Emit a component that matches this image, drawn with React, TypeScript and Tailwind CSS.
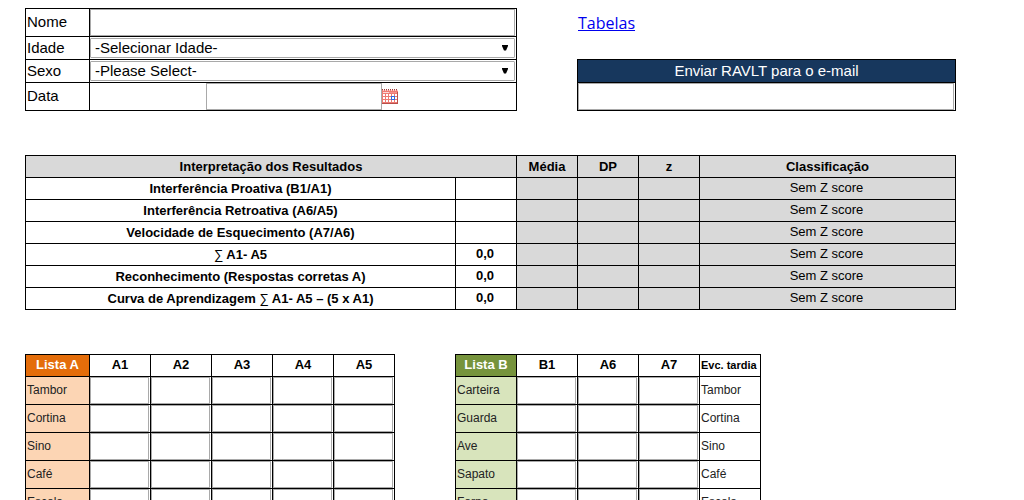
import React from "react";

const results: { label: React.ReactNode; value: string }[] = [
  { label: "Interferência Proativa (B1/A1)", value: "" },
  { label: "Interferência Retroativa (A6/A5)", value: "" },
  { label: "Velocidade de Esquecimento (A7/A6)", value: "" },
  { label: <><Sum /> A1- A5</>, value: "0,0" },
  { label: "Reconhecimento (Respostas corretas A)", value: "0,0" },
  { label: <>Curva de Aprendizagem <Sum /> A1- A5 – (5 x A1)</>, value: "0,0" },
];

const listA = ["Tambor", "Cortina", "Sino", "Café", "Escola"];
const listB = ["Carteira", "Guarda", "Ave", "Sapato", "Forno"];

const cell = "border border-black p-0";
const field = "block h-[27px] border border-[#a9a9a9] bg-white px-1 outline-none";

function Sum() {
  return <span className="font-normal">∑</span>;
}

function Select({ id, text }: { id: string; text: string }) {
  return (
    <div className="relative my-px mr-px">
      <select
        id={id}
        className="block h-5 w-full appearance-none rounded-[1px] border border-[#a9a9a9] bg-white pl-1 pr-5 text-[15px] leading-[18px] outline-none"
      >
        <option>{text}</option>
      </select>
      <svg
        viewBox="0 0 6 6"
        className="pointer-events-none absolute right-[7px] top-[7px] h-1.5 w-1.5"
        aria-hidden="true"
      >
        <path d="M0 0H6V1L4 5.5H2L0 1Z" fill="#000" />
      </svg>
    </div>
  );
}

function CalendarIcon() {
  return (
    <svg viewBox="0 0 16 15" className="block h-[15px] w-4" shapeRendering="crispEdges" aria-hidden="true">
      <rect y="1" width="16" height="14" fill="#ee7a72" />
      <path d="M0 .5H16" stroke="#a03c38" strokeDasharray="1 1" />
      <path d="M1 1.5H16" stroke="#f7cfcc" strokeDasharray="1 1" />
      <path d="M1 3.5H7" stroke="#fbd9d6" />
      <path d="M7 3.5H15" stroke="#f2938d" />
      <g fill="#fff">
        {[5, 8, 11].map((y) =>
          [1, 4, 7, 10, 13].map((x) => <rect key={`${x}-${y}`} x={x} y={y} width="2" height="2" />)
        )}
      </g>
      <path d="M0 14.5H16M15.5 3V15" stroke="#b9504b" />
      <rect x="9.5" y="7.5" width="3" height="3" fill="#fff" stroke="#2f6be0" />
    </svg>
  );
}

function PatientForm() {
  const label = `${cell} pl-px text-left font-normal`;
  return (
    <table className="w-full table-fixed border-collapse text-[15px] leading-[18px]">
      <colgroup>
        <col className="w-16" />
        <col />
      </colgroup>
      <tbody>
        <tr className="h-7">
          <th className={`${label} pb-0.5`}><label htmlFor="nome">Nome</label></th>
          <td className={`${cell} pr-px`}><input id="nome" className={`${field} w-full`} /></td>
        </tr>
        <tr className="h-[23px]">
          <th className={label}><label htmlFor="idade">Idade</label></th>
          <td className={cell}><Select id="idade" text="-Selecionar Idade-" /></td>
        </tr>
        <tr className="h-[23px]">
          <th className={label}><label htmlFor="sexo">Sexo</label></th>
          <td className={cell}><Select id="sexo" text="-Please Select-" /></td>
        </tr>
        <tr className="h-7">
          <th className={`${label} pb-0.5`}><label htmlFor="data">Data</label></th>
          <td className={`${cell} pr-0.5`}>
            <div className="flex items-center justify-center">
              <input id="data" className={`${field} w-44`} />
              <button type="button" aria-label="Abrir calendário"><CalendarIcon /></button>
            </div>
          </td>
        </tr>
      </tbody>
    </table>
  );
}

function EmailBox() {
  return (
    <div className="flex flex-col justify-between">
      <div className="pl-px pt-[3px]">
        <a href="#tabelas" className="font-['Open_Sans','Noto_Sans',sans-serif] text-[16px] leading-6 text-[#0000ee] underline">
          Tabelas
        </a>
      </div>
      <table className="w-full table-fixed border-collapse text-[15px] leading-[18px]">
        <thead>
          <tr className="h-[23px]">
            <th className={`${cell} bg-[#17375d] font-normal text-white`}>
              <label htmlFor="email">Enviar RAVLT para o e-mail</label>
            </th>
          </tr>
        </thead>
        <tbody>
          <tr className="h-7">
            <td className={`${cell} pr-px`}><input id="email" type="email" className={`${field} w-full`} /></td>
          </tr>
        </tbody>
      </table>
    </div>
  );
}

function ResultsTable() {
  const grey = `${cell} bg-[#d9d9d9]`;
  return (
    <table className="w-full table-fixed border-collapse text-center text-[13px] leading-4">
      <colgroup>
        <col />
        <col className="w-[61px]" />
        <col className="w-[61px]" />
        <col className="w-[61px]" />
        <col className="w-[61px]" />
        <col className="w-[256px]" />
      </colgroup>
      <thead>
        <tr className="h-[22px]">
          <th colSpan={2} className={grey}>Interpretação dos Resultados</th>
          <th className={grey}>Média</th>
          <th className={grey}>DP</th>
          <th className={grey}>z</th>
          <th className={grey}>Classificação</th>
        </tr>
      </thead>
      <tbody>
        {results.map((row, i) => (
          <tr key={i} className="h-[22px]">
            <th className={cell}>{row.label}</th>
            <td className={`${cell} pb-0.5 pr-0.5 font-bold`}>{row.value}</td>
            <td className={grey} />
            <td className={grey} />
            <td className={grey} />
            <td className={`${grey} pb-0.5 pr-0.5`}>Sem Z score</td>
          </tr>
        ))}
      </tbody>
    </table>
  );
}

type WordTableProps = {
  title: string;
  titleClass: string;
  wordClass: string;
  columns: string[];
  words: string[];
  late?: string[];
};

function WordTable({ title, titleClass, wordClass, columns, words, late }: WordTableProps) {
  return (
    <table className="w-full table-fixed border-collapse text-[12px] leading-4">
      <colgroup>
        <col />
        {columns.map((c) => <col key={c} className="w-[61px]" />)}
        {late && <col className="w-[61px]" />}
      </colgroup>
      <thead>
        <tr className="h-[22px] text-[13px]">
          <th className={`${cell} pb-0.5 text-white ${titleClass}`}>{title}</th>
          {columns.map((c) => <th key={c} className={`${cell} pb-0.5`}>{c}</th>)}
          {late && <th className={`${cell} whitespace-nowrap pb-0.5 pl-px text-left text-[11px]`}>Evc. tardia</th>}
        </tr>
      </thead>
      <tbody>
        {words.map((word, i) => (
          <tr key={word} className="h-7">
            <th className={`${cell} pb-0.5 pl-px text-left font-normal text-[#222] ${wordClass}`}>{word}</th>
            {columns.map((c) => (
              <td key={c} className={`${cell} pr-px`}>
                <input aria-label={`${word} ${c}`} className={`${field} w-full`} />
              </td>
            ))}
            {late && <td className={`${cell} pb-0.5 pl-px text-[#222]`}>{late[i]}</td>}
          </tr>
        ))}
      </tbody>
    </table>
  );
}

export default function App() {
  return (
    <main className="flex flex-col gap-11 bg-white pl-[25px] pr-[68px] pt-2 font-['Liberation_Sans',Arial,sans-serif] text-black">
      <section className="grid grid-cols-[492fr_379fr] gap-[60px]">
        <PatientForm />
        <EmailBox />
      </section>
      <ResultsTable />
      <section className="grid grid-cols-[370fr_60fr_306fr_195fr]">
        <WordTable
          title="Lista A"
          titleClass="bg-[#e46d0a]"
          wordClass="bg-[#fcd5b4]"
          columns={["A1", "A2", "A3", "A4", "A5"]}
          words={listA}
        />
        <div className="col-start-3">
          <WordTable
            title="Lista B"
            titleClass="bg-[#76933c]"
            wordClass="bg-[#d8e4bc]"
            columns={["B1", "A6", "A7"]}
            words={listB}
            late={listA}
          />
        </div>
      </section>
    </main>
  );
}
